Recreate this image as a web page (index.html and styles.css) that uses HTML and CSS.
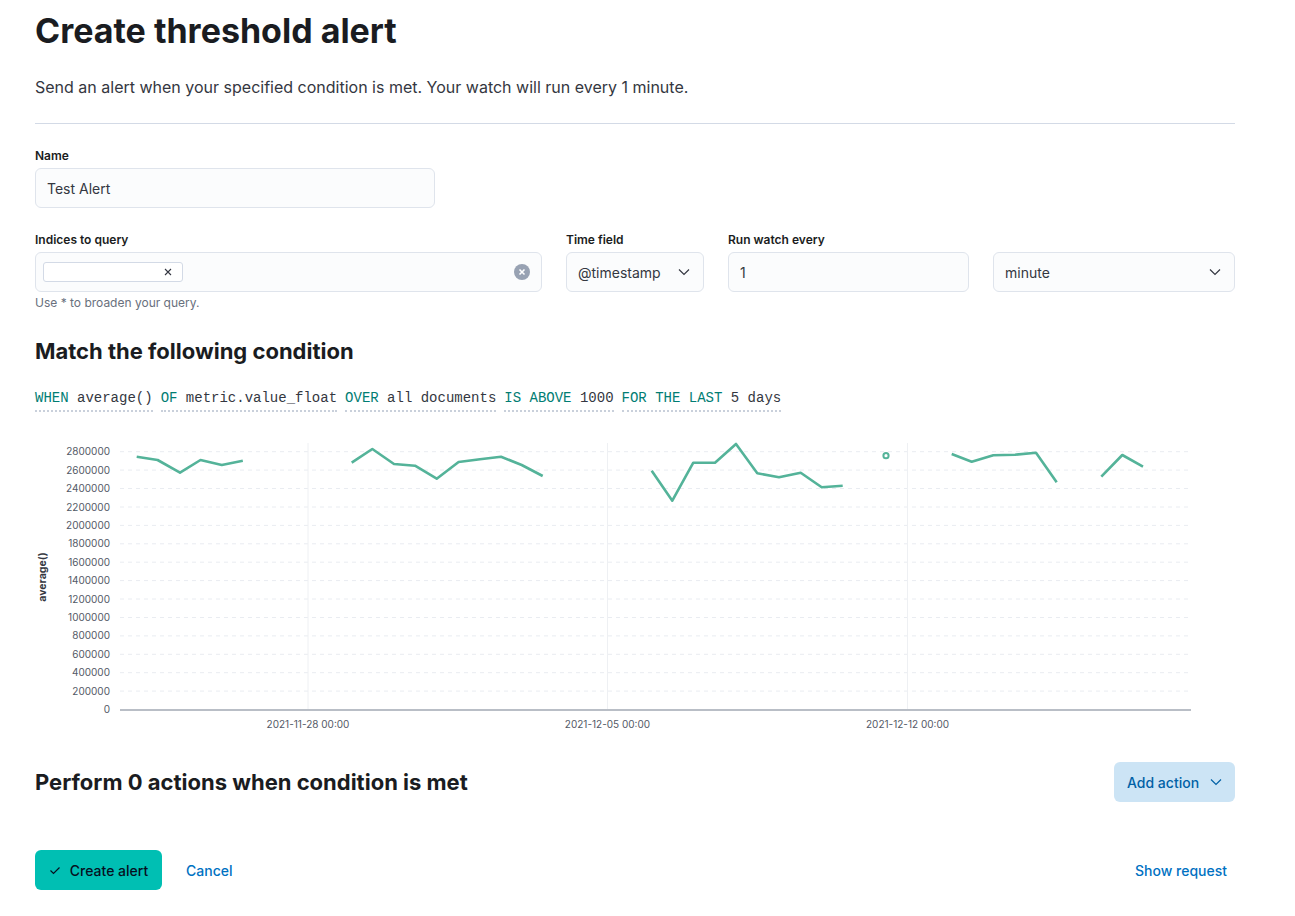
FILE: index.html
```html
<!DOCTYPE html>
<html lang="en">
<head>
<meta charset="utf-8">
<title>Create threshold alert</title>
<link rel="stylesheet" href="styles.css">
</head>
<body>
<div class="page">
  <h1 class="title">Create threshold alert</h1>
  <p class="desc">Send an alert when your specified condition is met. Your watch will run every 1 minute.</p>
  <hr class="rule">

  <div class="form-row name-row">
    <div class="label">Name</div>
    <div class="field name-field">Test Alert</div>
  </div>

  <div class="settings">
    <div class="col">
      <div class="label">Indices to query</div>
      <div class="field combo">
        <span class="chip">
          <svg class="chip-x" width="8" height="8" viewBox="0 0 8 8"><path d="M1 1L7 7M7 1L1 7" stroke="#343741" stroke-width="1.1" fill="none"/></svg>
        </span>
        <svg class="clear" width="16" height="16" viewBox="0 0 16 16"><circle cx="8" cy="8" r="8" fill="#98a2b3"/><path d="M5.5 5.5L10.5 10.5M10.5 5.5L5.5 10.5" stroke="#fff" stroke-width="1.6" fill="none"/></svg>
      </div>
      <div class="help">Use * to broaden your query.</div>
    </div>
    <div class="col">
      <div class="label">Time field</div>
      <div class="field select">
        <span>@timestamp</span>
        <svg class="chev" width="12" height="12" viewBox="0 0 12 12"><path d="M1 3.5L6 8.5L11 3.5" stroke="#343741" stroke-width="1.2" fill="none"/></svg>
      </div>
    </div>
    <div class="col">
      <div class="label">Run watch every</div>
      <div class="field">1</div>
    </div>
    <div class="col">
      <div class="label">&nbsp;</div>
      <div class="field select">
        <span>minute</span>
        <svg class="chev" width="12" height="12" viewBox="0 0 12 12"><path d="M1 3.5L6 8.5L11 3.5" stroke="#343741" stroke-width="1.2" fill="none"/></svg>
      </div>
    </div>
  </div>

  <h2 class="section cond-title">Match the following condition</h2>
  <div class="expr">
    <span class="clause"><span class="kw">WHEN</span> average()</span>
    <span class="clause"><span class="kw">OF</span> metric.value_float</span>
    <span class="clause"><span class="kw">OVER</span> all documents</span>
    <span class="clause"><span class="kw">IS ABOVE</span> 1000</span>
    <span class="clause"><span class="kw">FOR THE LAST</span> 5 days</span>
  </div>

  <svg class="chart" width="1200" height="305" viewBox="0 0 1200 305">
    <g transform="translate(-35,-430)">
      <g class="grid-h">
        <line x1="120" x2="1190" y1="451.7" y2="451.7"/>
        <line x1="120" x2="1190" y1="470.1" y2="470.1"/>
        <line x1="120" x2="1190" y1="488.5" y2="488.5"/>
        <line x1="120" x2="1190" y1="507.0" y2="507.0"/>
        <line x1="120" x2="1190" y1="525.4" y2="525.4"/>
        <line x1="120" x2="1190" y1="543.8" y2="543.8"/>
        <line x1="120" x2="1190" y1="562.2" y2="562.2"/>
        <line x1="120" x2="1190" y1="580.6" y2="580.6"/>
        <line x1="120" x2="1190" y1="599.0" y2="599.0"/>
        <line x1="120" x2="1190" y1="617.5" y2="617.5"/>
        <line x1="120" x2="1190" y1="635.9" y2="635.9"/>
        <line x1="120" x2="1190" y1="654.3" y2="654.3"/>
        <line x1="120" x2="1190" y1="672.7" y2="672.7"/>
        <line x1="120" x2="1190" y1="691.1" y2="691.1"/>
      </g>
      <g class="grid-v">
        <line x1="308" x2="308" y1="443" y2="709"/>
        <line x1="607.5" x2="607.5" y1="443" y2="709"/>
        <line x1="907.5" x2="907.5" y1="443" y2="709"/>
      </g>
      <line class="axis" x1="120" x2="1191" y1="710" y2="710"/>
      <g class="ytick">
        <text x="110" y="455.2">2800000</text>
        <text x="110" y="473.6">2600000</text>
        <text x="110" y="492.0">2400000</text>
        <text x="110" y="510.5">2200000</text>
        <text x="110" y="528.9">2000000</text>
        <text x="110" y="547.3">1800000</text>
        <text x="110" y="565.7">1600000</text>
        <text x="110" y="584.1">1400000</text>
        <text x="110" y="602.5">1200000</text>
        <text x="110" y="621.0">1000000</text>
        <text x="110" y="639.4">800000</text>
        <text x="110" y="657.8">600000</text>
        <text x="110" y="676.2">400000</text>
        <text x="110" y="694.6">200000</text>
        <text x="110" y="713.0">0</text>
      </g>
      <g class="xtick">
        <text x="308" y="727.5">2021-11-28 00:00</text>
        <text x="607.5" y="727.5">2021-12-05 00:00</text>
        <text x="907.5" y="727.5">2021-12-12 00:00</text>
      </g>
      <text class="ytitle" transform="translate(45.5,577) rotate(-90)">average()</text>
      <g class="series">
        <polyline points="136.7,456.7 157.6,460 180,472.7 200.5,460 221.8,465 242.8,460.7"/>
        <polyline points="351.7,462.7 372.3,449 394,464 415,465.7 436.7,478.7 458.6,462 480,459.3 501,456.7 521.7,465 542.7,476"/>
        <polyline points="651.7,470.7 672.3,500.7 693.3,462.7 715,462.7 736,444 757.3,473.3 779,477.3 800.7,472.7 821.7,487.3 842.7,485.7"/>
        <polyline points="951.7,454 971.7,461.7 993.3,455.3 1015,454.7 1036,452.7 1056.7,482.3"/>
        <polyline points="1101.3,476.7 1122.3,455 1143,466.7"/>
        <circle cx="886" cy="455.7" r="2.6"/>
      </g>
    </g>
  </svg>

  <div class="actions-row">
    <h2 class="section">Perform 0 actions when condition is met</h2>
    <button class="add-action">Add action
      <svg width="12" height="12" viewBox="0 0 12 12"><path d="M1 3.5L6 8.5L11 3.5" stroke="#0061a6" stroke-width="1.2" fill="none"/></svg>
    </button>
  </div>

  <div class="footer">
    <div class="footer-left">
      <button class="primary">
        <svg width="12" height="12" viewBox="0 0 12 12"><path d="M1.5 6.5L4.5 9.5L10.5 3.5" stroke="#07101f" stroke-width="1.2" fill="none"/></svg>
        Create alert
      </button>
      <button class="link">Cancel</button>
    </div>
    <button class="link">Show request</button>
  </div>
</div>
</body>
</html>
```

FILE: styles.css
```css
* { box-sizing: border-box; }
html, body { margin: 0; padding: 0; background: #fff; }
body {
  font-family: Inter, "Noto Sans", sans-serif;
  color: #343741;
}
.page {
  width: 1200px;
  margin-left: 35px;
  padding-top: 11px;
}
.title {
  margin: 0;
  font-size: 34px;
  line-height: 40px;
  font-weight: 700;
  color: #1a1c21;
}
.desc {
  margin: 24px 0 0;
  font-size: 16px;
  line-height: 24px;
  color: #343741;
}
.rule {
  margin: 24px 0 0;
  border: 0;
  border-top: 1px solid #d3dae6;
  height: 0;
}
.label {
  font-size: 12px;
  line-height: 18px;
  font-weight: 600;
  color: #1a1c21;
  margin-bottom: 3px;
}
.name-row { margin-top: 23px; width: 400px; }
.field {
  height: 40px;
  background: #fbfcfd;
  border: 1px solid #dfe4ec;
  border-radius: 6px;
  display: flex;
  align-items: center;
  padding: 0 11px;
  font-size: 14px;
  color: #343741;
}
.settings {
  margin-top: 23px;
  display: grid;
  grid-template-columns: 507px 138px 241px 242px;
  column-gap: 24px;
}
.col { display: flex; flex-direction: column; }
.combo { padding: 0 11px 0 7px; justify-content: space-between; }
.chip {
  width: 140px;
  height: 20px;
  background: #fff;
  border: 1px solid #d3dae6;
  border-radius: 3px;
  display: flex;
  align-items: center;
  justify-content: flex-end;
  padding-right: 10px;
}
.select { justify-content: space-between; padding-right: 13px; }
.help {
  margin-top: 3px;
  font-size: 12px;
  line-height: 16px;
  color: #69707d;
}
.section {
  margin: 0;
  font-size: 22px;
  line-height: 28px;
  font-weight: 700;
  color: #1a1c21;
}
.cond-title { margin-top: 26px; }
.expr {
  margin-top: 23px;
  font-family: "Liberation Mono", "DejaVu Sans Mono", monospace;
  font-size: 14px;
  line-height: 20px;
  color: #343741;
  display: flex;
  gap: 8px;
}
.clause {
  border-bottom: 2px dotted #c9d0db;
  padding-bottom: 2px;
  white-space: pre;
}
.kw { color: #017d73; }
.chart { display: block; margin-top: 18px; }
.grid-h line { stroke: #e9ecf1; stroke-width: 1; stroke-dasharray: 4 4; }
.grid-v line { stroke: #eef0f3; stroke-width: 1; }
.axis { stroke: #b9bec6; stroke-width: 2; }
.ytick text {
  font-family: Inter, sans-serif;
  font-size: 10px;
  fill: #535966;
  text-anchor: end;
}
.xtick text {
  font-family: Inter, sans-serif;
  font-size: 10px;
  fill: #535966;
  text-anchor: middle;
}
.ytitle {
  font-family: Inter, sans-serif;
  font-size: 10.5px;
  font-weight: 700;
  fill: #343741;
  text-anchor: middle;
}
.series polyline, .series circle {
  fill: none;
  stroke: #54b399;
  stroke-width: 2.6;
  stroke-linejoin: round;
}
.series circle { fill: #fff; stroke-width: 2; }
.actions-row {
  margin-top: 27px;
  display: flex;
  justify-content: space-between;
  align-items: center;
}
button {
  font-family: Inter, sans-serif;
  font-size: 14px;
  font-weight: 500;
  border: 0;
  cursor: pointer;
}
.add-action {
  height: 40px;
  width: 121px;
  padding: 0 13px;
  border-radius: 6px;
  background: #cce4f5;
  color: #0061a6;
  display: flex;
  align-items: center;
  justify-content: space-between;
}
.footer {
  margin-top: 48px;
  display: flex;
  justify-content: space-between;
  align-items: center;
}
.footer-left { display: flex; align-items: center; gap: 24px; }
.primary {
  height: 40px;
  width: 127px;
  border-radius: 6px;
  background: #00bfb3;
  color: #07101f;
  display: flex;
  align-items: center;
  justify-content: center;
  gap: 9px;
}
.link {
  background: none;
  color: #0071c2;
  padding: 0 8px;
  height: 40px;
}
.footer-left .link { padding: 0; }
```
